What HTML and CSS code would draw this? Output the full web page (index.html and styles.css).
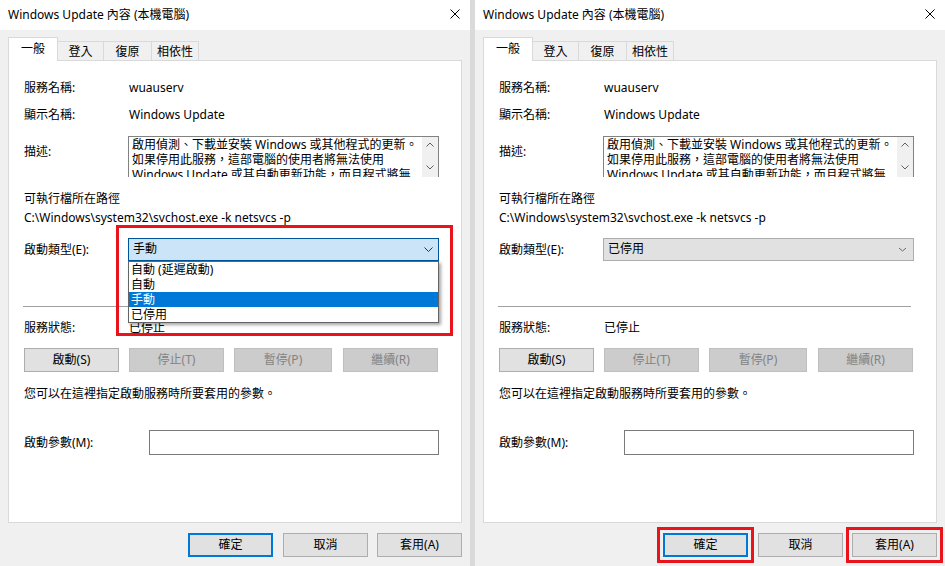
FILE: index.html
```html
<!DOCTYPE html>
<html lang="zh-Hant">
<head>
<meta charset="utf-8">
<title>Windows Update 內容</title>
<link rel="stylesheet" href="styles.css">
</head>
<body>
<div class="screen">
  <section class="dialog">
    <header class="titlebar">
      <span class="title">Windows Update 內容 (本機電腦)</span>
      <svg class="close" width="10" height="10" viewBox="0 0 10 10"><path d="M0.5 0.5L9.5 9.5M9.5 0.5L0.5 9.5" stroke="#000" stroke-width="1" fill="none"/></svg>
    </header>
    <div class="body">
      <div class="tabs">
        <div class="tab active t1">一般</div>
        <div class="tab t2">登入</div>
        <div class="tab t3">復原</div>
        <div class="tab t4">相依性</div>
      </div>
      <div class="panel">
        <div class="row r-name"><span class="label">服務名稱:</span><span class="value">wuauserv</span></div>
        <div class="row r-disp"><span class="label">顯示名稱:</span><span class="value">Windows Update</span></div>
        <div class="row r-desc">
          <span class="label">描述:</span>
          <div class="desc">
            <div class="desc-text">啟用偵測、下載並安裝 Windows 或其他程式的更新。<br>如果停用此服務，這部電腦的使用者將無法使用<br>Windows Update 或其自動更新功能，而且程式將無<br>法使用 Windows Update Agent (WUA) API。</div>
            <div class="scroll">
              <svg width="8" height="5" viewBox="0 0 8 5"><path d="M0.5 4.5L4 1L7.5 4.5" stroke="#606060" fill="none"/></svg>
              <svg width="8" height="5" viewBox="0 0 8 5"><path d="M0.5 0.5L4 4L7.5 0.5" stroke="#606060" fill="none"/></svg>
            </div>
          </div>
        </div>
        <div class="line r-pathlabel">可執行檔所在路徑</div>
        <div class="line r-path">C:\Windows\system32\svchost.exe -k netsvcs -p</div>
        <div class="row r-start">
          <span class="label">啟動類型(E):</span>
          <div class="select open">
            <span class="sel-text">手動</span>
            <svg class="chev" width="9" height="5" viewBox="0 0 9 5"><path d="M0.5 0.5L4.5 4.5L8.5 0.5" stroke="#333" fill="none"/></svg>
            <ul class="dropdown">
              <li>自動 (延遲啟動)</li>
              <li>自動</li>
              <li class="hilite">手動</li>
              <li>已停用</li>
            </ul>
            <div class="redbox"></div>
          </div>
        </div>
        <div class="sep"></div>
        <div class="row r-status"><span class="label">服務狀態:</span><span class="value">已停止</span></div>
        <div class="svc-buttons">
          <button class="btn w95">啟動(S)</button>
          <button class="btn w95 g10 disabled">停止(T)</button>
          <button class="btn w98 g10 disabled">暫停(P)</button>
          <button class="btn w95 g11 disabled">繼續(R)</button>
        </div>
        <p class="hint">您可以在這裡指定啟動服務時所要套用的參數。</p>
        <div class="row r-param"><span class="label wide">啟動參數(M):</span><div class="input"></div></div>
      </div>
      <div class="actions">
        <button class="btn act default">確定</button>
        <button class="btn act cancel">取消</button>
        <button class="btn act apply">套用(A)</button>
      </div>
    </div>
  </section>

  <div class="gap"></div>

  <section class="dialog">
    <header class="titlebar">
      <span class="title">Windows Update 內容 (本機電腦)</span>
      <svg class="close" width="10" height="10" viewBox="0 0 10 10"><path d="M0.5 0.5L9.5 9.5M9.5 0.5L0.5 9.5" stroke="#000" stroke-width="1" fill="none"/></svg>
    </header>
    <div class="body">
      <div class="tabs">
        <div class="tab active t1">一般</div>
        <div class="tab t2">登入</div>
        <div class="tab t3">復原</div>
        <div class="tab t4">相依性</div>
      </div>
      <div class="panel">
        <div class="row r-name"><span class="label">服務名稱:</span><span class="value">wuauserv</span></div>
        <div class="row r-disp"><span class="label">顯示名稱:</span><span class="value">Windows Update</span></div>
        <div class="row r-desc">
          <span class="label">描述:</span>
          <div class="desc">
            <div class="desc-text">啟用偵測、下載並安裝 Windows 或其他程式的更新。<br>如果停用此服務，這部電腦的使用者將無法使用<br>Windows Update 或其自動更新功能，而且程式將無<br>法使用 Windows Update Agent (WUA) API。</div>
            <div class="scroll">
              <svg width="8" height="5" viewBox="0 0 8 5"><path d="M0.5 4.5L4 1L7.5 4.5" stroke="#606060" fill="none"/></svg>
              <svg width="8" height="5" viewBox="0 0 8 5"><path d="M0.5 0.5L4 4L7.5 0.5" stroke="#606060" fill="none"/></svg>
            </div>
          </div>
        </div>
        <div class="line r-pathlabel">可執行檔所在路徑</div>
        <div class="line r-path">C:\Windows\system32\svchost.exe -k netsvcs -p</div>
        <div class="row r-start">
          <span class="label">啟動類型(E):</span>
          <div class="select">
            <span class="sel-text">已停用</span>
            <svg class="chev light" width="9" height="5" viewBox="0 0 9 5"><path d="M1 1L4.5 4L8 1" stroke="#6a6a6a" fill="none"/></svg>
          </div>
        </div>
        <div class="sep"></div>
        <div class="row r-status"><span class="label">服務狀態:</span><span class="value">已停止</span></div>
        <div class="svc-buttons">
          <button class="btn w95">啟動(S)</button>
          <button class="btn w95 g10 disabled">停止(T)</button>
          <button class="btn w98 g10 disabled">暫停(P)</button>
          <button class="btn w95 g11 disabled">繼續(R)</button>
        </div>
        <p class="hint">您可以在這裡指定啟動服務時所要套用的參數。</p>
        <div class="row r-param"><span class="label wide">啟動參數(M):</span><div class="input"></div></div>
      </div>
      <div class="actions">
        <button class="btn act default marked">確定</button>
        <button class="btn act cancel">取消</button>
        <button class="btn act apply marked">套用(A)</button>
      </div>
    </div>
  </section>
</div>
</body>
</html>
```

FILE: styles.css
```css
* { box-sizing: border-box; }
html, body { margin: 0; padding: 0; }
body {
  width: 945px;
  height: 566px;
  overflow: hidden;
  background: #f0f0f0;
  color: #000;
  font-family: "Noto Sans", "Noto Sans CJK TC", sans-serif;
  font-size: 12px;
  line-height: 16px;
}
.screen { display: flex; width: 945px; height: 566px; }
.gap { width: 5px; flex: none; background: #dadada; }
.dialog {
  width: 470px;
  flex: none;
  height: 566px;
  display: flex;
  flex-direction: column;
  position: relative;
  background: #f0f0f0;
}
.titlebar {
  height: 30px;
  flex: none;
  background: #fff;
  display: flex;
  align-items: center;
  justify-content: space-between;
  padding: 0 10px 1px 8px;
}
.close { display: block; margin-bottom: 1px; }
.body {
  flex: 1;
  display: flex;
  flex-direction: column;
  padding: 7px 8px 0 8px;
}
.tabs { display: flex; align-items: flex-end; height: 23px; flex: none; }
.tab {
  height: 19px;
  border: 1px solid #d9d9d9;
  border-bottom: none;
  border-left: none;
  background: #f0f0f0;
  display: flex;
  align-items: center;
  justify-content: center;
  padding-top: 1px;
}
.tab.active {
  height: 24px;
  margin-bottom: -1px;
  border-left: 1px solid #d9d9d9;
  background: #fff;
  position: relative;
  z-index: 1;
  padding: 0 0 2px 0;
}
.t1 { width: 50px; }
.t2 { width: 46px; }
.t3 { width: 48px; }
.t4 { width: 47px; }

.panel {
  height: 463px;
  flex: none;
  background: #fff;
  border: 1px solid #d9d9d9;
  padding: 19px 21px 0 15px;
  display: flex;
  flex-direction: column;
}
.row { display: flex; align-items: center; height: 16px; flex: none; }
.label { width: 104px; flex: none; white-space: nowrap; }
.label.wide { width: 125px; }
.value { padding-left: 1px; white-space: nowrap; }
.line { height: 16px; flex: none; white-space: nowrap; }

.r-disp { margin-top: 11px; }
.r-desc { margin-top: 13px; height: 41px; align-items: flex-start; }
.r-desc .label { margin-top: 8px; }
.desc {
  width: 311px;
  height: 41px;
  border: 1px solid #828282;
  border-bottom: none;
  display: flex;
  overflow: hidden;
}
.desc-text {
  flex: 1;
  padding-left: 3px;
  line-height: 15px;
  white-space: nowrap;
  overflow: hidden;
}
.scroll {
  width: 16px;
  flex: none;
  background: #f0f0f0;
  display: flex;
  flex-direction: column;
  align-items: center;
  padding-top: 5px;
  gap: 18px;
}
.scroll svg { display: block; }
.r-pathlabel { margin-top: 14px; }
.r-path { margin-top: 3px; }

.r-start { margin-top: 12px; height: 23px; align-items: flex-start; }
.r-start .label { margin-top: 4px; }
.select {
  position: relative;
  width: 311px;
  height: 23px;
  border: 1px solid #adadad;
  background: #e1e1e1;
  display: flex;
  align-items: center;
  justify-content: space-between;
  padding: 0 5px 1px 4px;
}
.select.open { border-color: #005499; background: #cce4f7; }
.chev { display: block; }
.chev.light { margin-right: 1px; }
.dropdown {
  position: absolute;
  left: -1px;
  top: calc(100% + 1px);
  width: 311px;
  margin: 0;
  padding: 0;
  list-style: none;
  background: #fff;
  border: 1px solid #646464;
  box-shadow: 2px 2px 3px rgba(0, 0, 0, 0.35);
  z-index: 5;
}
.dropdown li { height: 15px; line-height: 15px; padding-left: 2px; white-space: nowrap; }
.dropdown li.hilite { background: #0078d7; color: #fff; }
.redbox {
  position: absolute;
  left: -13px;
  top: -14px;
  width: 337px;
  height: 111px;
  border: 3px solid #e8131b;
  z-index: 6;
  pointer-events: none;
}

.sep {
  margin: 45px 4px 0 -1px;
  height: 1px;
  background: #a0a0a0;
  flex: none;
}
.r-status { margin-top: 13px; }
.svc-buttons {
  margin-top: 12px;
  display: flex;
  flex: none;
}
.btn {
  font: inherit;
  color: #000;
  height: 24px;
  padding: 0;
  margin: 0;
  border: 1px solid #adadad;
  background: #e1e1e1;
  border-radius: 0;
}
.btn.w95 { width: 95px; }
.btn.w98 { width: 98px; }
.btn.g10 { margin-left: 10px; }
.btn.g11 { margin-left: 11px; }
.btn.disabled { background: #cccccc; border-color: #bfbfbf; color: #838383; }
.hint { margin: 14px 0 0 0; height: 16px; white-space: nowrap; }
.r-param { margin-top: 28px; height: 25px; align-items: flex-start; }
.r-param .label { margin-top: 5px; }
.input {
  width: 290px;
  height: 25px;
  border: 1px solid #7a7a7a;
  background: #fff;
}

.actions {
  margin-top: 10px;
  display: flex;
  justify-content: flex-end;
  flex: none;
}
.btn.act { width: 85px; }
.btn.cancel { margin-left: 10px; }
.btn.apply { margin-left: 9px; }
.btn.default { border: 2px solid #0078d7; }
.btn.marked { outline: 3px solid #e8131b; outline-offset: 3px; }
```
